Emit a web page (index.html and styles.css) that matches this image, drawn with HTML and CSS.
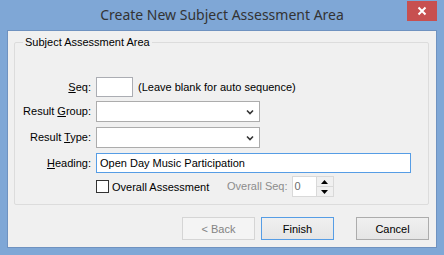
FILE: index.html
```html
<!DOCTYPE html>
<html lang="en">
<head>
    <meta charset="UTF-8">
    <title>Create New Subject Assessment Area</title>
    <link rel="stylesheet" href="styles.css">
</head>
<body>
    <div class="window">
        <div class="titlebar">
            <span></span>
            <div class="title">Create New Subject Assessment Area</div>
            <div class="close">
                <svg width="10" height="10" viewBox="0 0 10 10">
                    <path d="M1.5 1.5 L8.5 8.5 M8.5 1.5 L1.5 8.5" stroke="#fff" stroke-width="2" fill="none"/>
                </svg>
            </div>
        </div>

        <div class="client">
            <fieldset class="group">
                <legend>Subject Assessment Area</legend>
                <div class="form">
                    <label class="lbl"><u>S</u>eq:</label>
                    <div class="field">
                        <div class="textbox seq"></div>
                        <span class="hint">(Leave blank for auto sequence)</span>
                    </div>

                    <label class="lbl">Result <u>G</u>roup:</label>
                    <div class="field">
                        <div class="combo">
                            <svg width="8" height="6" viewBox="0 0 8 6">
                                <path d="M1 1.5 L4 4.5 L7 1.5" stroke="#333" stroke-width="1.6" fill="none"/>
                            </svg>
                        </div>
                    </div>

                    <label class="lbl">Result <u>T</u>ype:</label>
                    <div class="field">
                        <div class="combo">
                            <svg width="8" height="6" viewBox="0 0 8 6">
                                <path d="M1 1.5 L4 4.5 L7 1.5" stroke="#333" stroke-width="1.6" fill="none"/>
                            </svg>
                        </div>
                    </div>

                    <label class="lbl"><u>H</u>eading:</label>
                    <div class="field">
                        <div class="textbox heading">Open Day Music Participation</div>
                    </div>

                    <span></span>
                    <div class="field">
                        <div class="check-wrap">
                            <span class="checkbox"></span>
                            <span>Overall Assessment</span>
                        </div>
                        <span class="disabled-text">Overall Seq:</span>
                        <div class="spinner">
                            <span class="spin-value">0</span>
                            <div class="spin-buttons">
                                <div class="spin-btn">
                                    <svg width="7" height="4" viewBox="0 0 7 4"><path d="M0 4 L3.5 0 L7 4 Z" fill="#000"/></svg>
                                </div>
                                <div class="spin-btn">
                                    <svg width="7" height="4" viewBox="0 0 7 4"><path d="M0 0 L3.5 4 L7 0 Z" fill="#000"/></svg>
                                </div>
                            </div>
                        </div>
                    </div>
                </div>
            </fieldset>

            <div class="buttons">
                <div class="btn disabled">&lt; Back</div>
                <div class="btn default">Finish</div>
                <div class="btn cancel">Cancel</div>
            </div>
        </div>
    </div>
</body>
</html>
```

FILE: styles.css
```css
body {
    margin: 0;
    background-color: #7fa7d6;
    font-family: "Liberation Sans", Arial, sans-serif;
    font-size: 11px;
    color: #000;
}
.window {
    width: 444px;
    height: 255px;
    box-sizing: border-box;
    padding: 0 7px 7px;
    background-color: #7fa7d6;
}
.titlebar {
    height: 30px;
    display: grid;
    grid-template-columns: 1fr auto 1fr;
    align-items: start;
}
.title {
    font-family: "Noto Sans", sans-serif;
    font-size: 14px;
    color: #333;
    line-height: 30px;
    white-space: nowrap;
}
.close {
    justify-self: end;
    width: 30px;
    height: 20px;
    margin-top: 1px;
    background-color: #c75050;
    display: flex;
    align-items: center;
    justify-content: center;
}
.client {
    height: 218px;
    box-sizing: border-box;
    border: 1px solid #6f92c0;
    background-color: #f0f0f0;
    padding: 5px 7px 0 6px;
}
.group {
    margin: 0;
    padding: 0 0 7px 0;
    border: 1px solid #dcdcdc;
    border-radius: 2px;
}
.group legend {
    margin-left: 8px;
    padding: 0 2px;
    line-height: 13px;
}
.form {
    display: grid;
    grid-template-columns: 76px 1fr;
    grid-template-rows: 24px 26px 26px 23px 21px;
    column-gap: 5px;
    padding-top: 28px;
}
.lbl {
    display: block;
    text-align: right;
    line-height: 20px;
    height: 20px;
    white-space: nowrap;
}
.field {
    display: flex;
    align-items: flex-start;
}
.textbox {
    box-sizing: border-box;
    height: 20px;
    border: 1px solid #abadb3;
    background-color: #fff;
    padding: 0 3px;
    line-height: 18px;
}
.seq {
    width: 37px;
}
.hint {
    margin-left: 5px;
    line-height: 20px;
}
.combo {
    box-sizing: border-box;
    width: 164px;
    height: 21px;
    border: 1px solid #acacac;
    background-color: #fff;
    display: flex;
    justify-content: flex-end;
    align-items: center;
    padding-right: 5px;
}
.heading {
    width: 315px;
    border-color: #569de5;
}
.check-wrap {
    width: 131px;
    height: 21px;
    display: flex;
    align-items: center;
    gap: 3px;
}
.checkbox {
    box-sizing: border-box;
    width: 13px;
    height: 13px;
    border: 1px solid #333;
    background-color: #fff;
}
.disabled-text {
    color: #8c8c8c;
    line-height: 21px;
}
.spinner {
    box-sizing: border-box;
    width: 42px;
    height: 21px;
    margin-left: 4px;
    border: 1px solid #d9d9d9;
    background-color: #fff;
    display: flex;
}
.spin-value {
    flex: 1;
    color: #6d6d6d;
    padding-left: 2px;
    line-height: 19px;
}
.spin-buttons {
    width: 16px;
    display: flex;
    flex-direction: column;
    border-left: 1px solid #d9d9d9;
}
.spin-btn {
    flex: 1;
    display: flex;
    align-items: center;
    justify-content: center;
    background-color: #f0f0f0;
}
.spin-btn + .spin-btn {
    border-top: 1px solid #d9d9d9;
}
.buttons {
    display: flex;
    justify-content: flex-end;
    margin-top: 12px;
}
.btn {
    box-sizing: border-box;
    width: 73px;
    height: 23px;
    border: 1px solid #acacac;
    background: linear-gradient(#f0f0f0, #e5e5e5);
    display: flex;
    align-items: center;
    justify-content: center;
    margin-left: 6px;
}
.btn.disabled {
    color: #838383;
    border-color: #d5d5d5;
    background: #f4f4f4;
}
.btn.default {
    border-color: #569de5;
}
.btn.cancel {
    margin-left: 22px;
}
```
